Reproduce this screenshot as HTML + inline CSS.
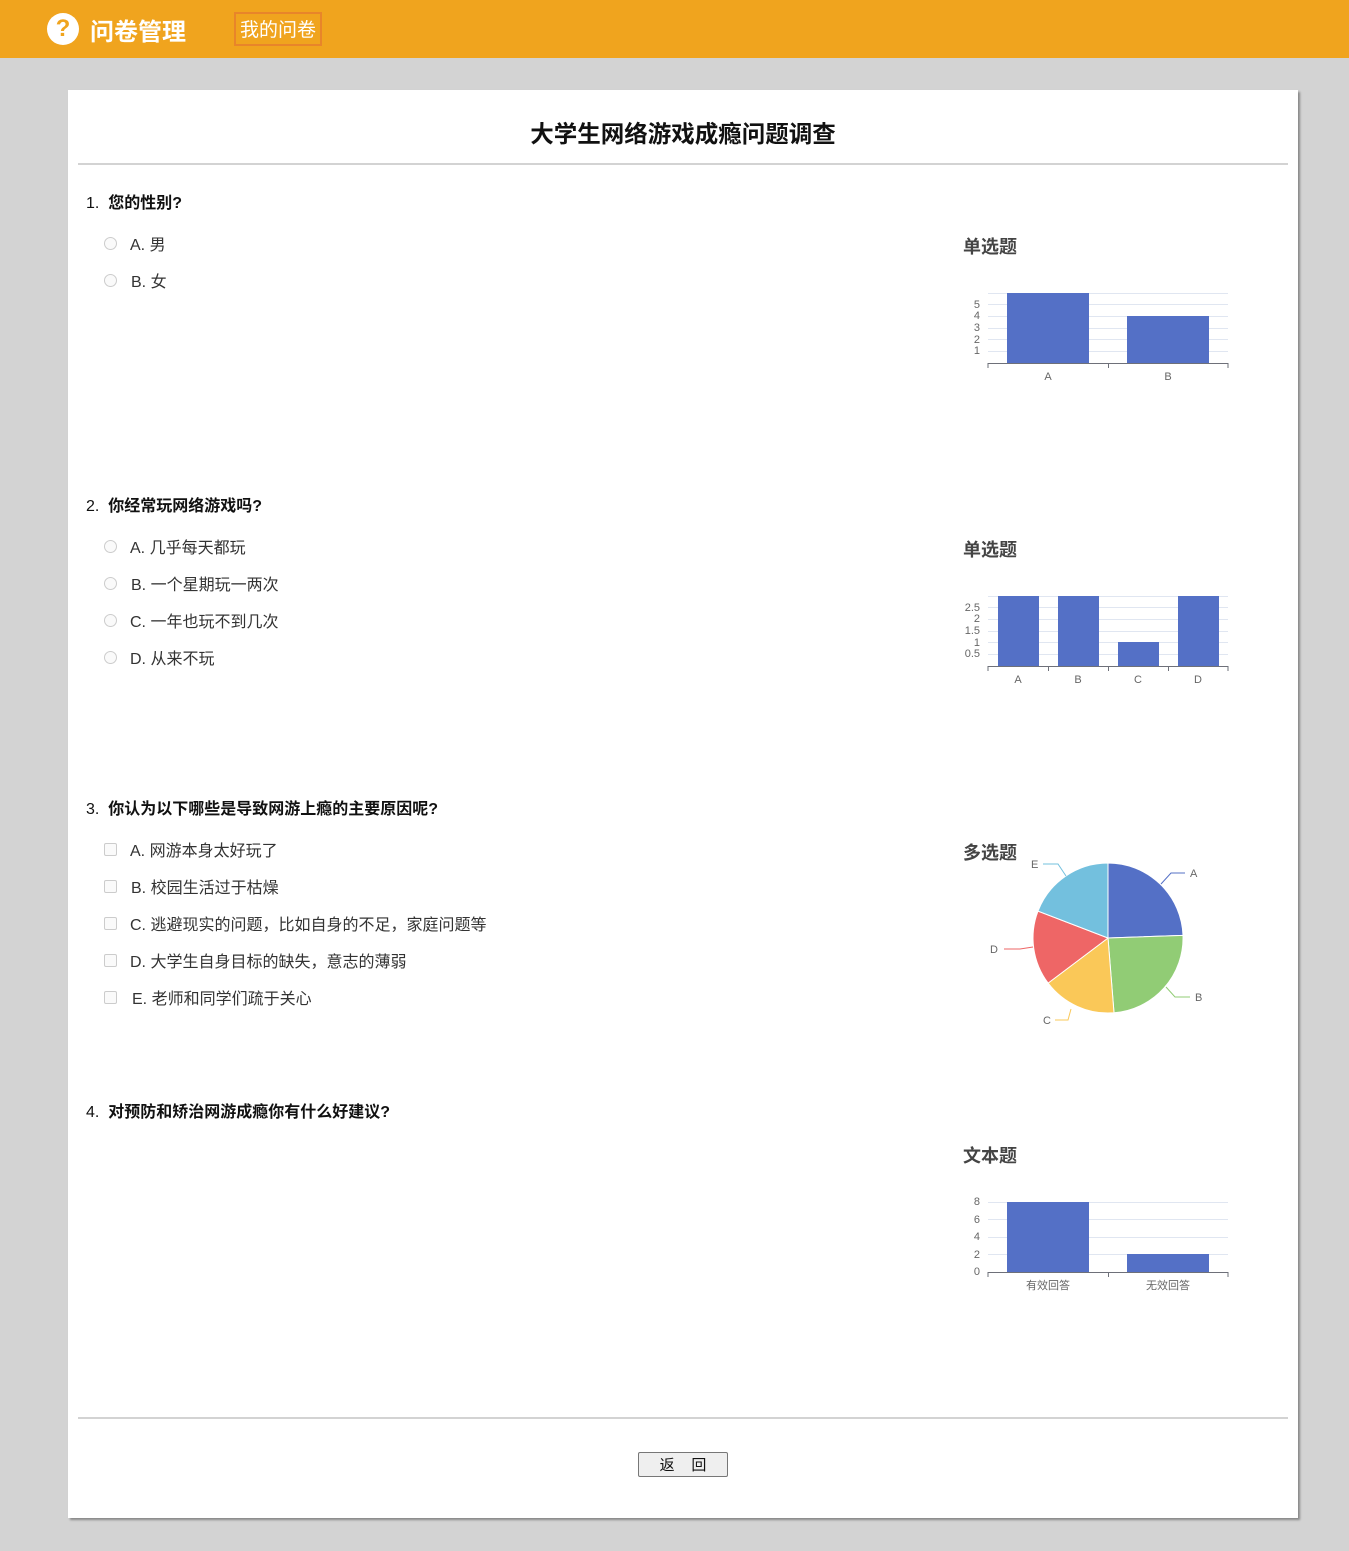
<!DOCTYPE html>
<html><head><meta charset="utf-8"><style>
body{margin:0;width:1349px;height:1551px;background:#d3d3d3;font-family:"Liberation Sans","Noto Sans CJK SC",sans-serif;position:relative;overflow:hidden}
.hdr{position:absolute;left:0;top:0;width:1349px;height:58px;background:#f0a41e}
.card{position:absolute;left:68px;top:90px;width:1230px;height:1428px;background:#fff;box-shadow:2px 2px 2px #888}
.a{position:absolute;white-space:nowrap}
.q{font-size:16px;color:#111}
.q b{font-weight:bold}
.o{font-size:16px;color:#333}
.r{position:absolute;width:11px;height:11px;border:1px solid #ccc;border-radius:50%;background:#fafafa}
.c{position:absolute;width:11px;height:11px;border:1px solid #ccc;border-radius:2px;background:#fafafa}
.ct{font-size:18px;font-weight:bold;color:#444}
</style></head><body>
<div class="hdr"></div>
<div class="a" style="left:47px;top:13px;width:32px;height:32px;border-radius:50%;background:#fff;color:#f0a41e;font-weight:bold;font-size:24px;text-align:center;line-height:32px">?</div>
<div class="a" style="left:90px;top:12px;font-size:24px;font-weight:bold;color:#fff">问卷管理</div>
<div class="a" style="left:234px;top:12px;width:84px;height:30px;border:2px solid #e8852a;color:#fff;font-size:19px;line-height:34px;text-align:center">我的问卷</div>
<div class="card"></div>
<div class="a" style="left:68px;width:1230px;top:115px;text-align:center;font-size:23.5px;font-weight:bold;color:#111">大学生网络游戏成瘾问题调查</div>
<div class="a" style="left:78px;top:163px;width:1210px;height:2px;background:#d3d3d3"></div>
<div class="a" style="left:78px;top:1417px;width:1210px;height:2px;background:#d3d3d3"></div>

<div class="a q" style="left:86px;top:189px">1.&nbsp; <b>您的性别?</b></div>
<div class="r" style="left:104px;top:237px"></div><div class="a o" style="left:130px;top:231px">A. 男</div>
<div class="r" style="left:104px;top:274px"></div><div class="a o" style="left:131px;top:268px">B. 女</div>

<div class="a q" style="left:86px;top:492px">2.&nbsp; <b>你经常玩网络游戏吗?</b></div>
<div class="r" style="left:104px;top:540px"></div><div class="a o" style="left:130px;top:534px">A. 几乎每天都玩</div>
<div class="r" style="left:104px;top:577px"></div><div class="a o" style="left:131px;top:571px">B. 一个星期玩一两次</div>
<div class="r" style="left:104px;top:614px"></div><div class="a o" style="left:130px;top:608px">C. 一年也玩不到几次</div>
<div class="r" style="left:104px;top:651px"></div><div class="a o" style="left:130px;top:645px">D. 从来不玩</div>

<div class="a q" style="left:86px;top:795px">3.&nbsp; <b>你认为以下哪些是导致网游上瘾的主要原因呢?</b></div>
<div class="c" style="left:104px;top:843px"></div><div class="a o" style="left:130px;top:837px">A. 网游本身太好玩了</div>
<div class="c" style="left:104px;top:880px"></div><div class="a o" style="left:131px;top:874px">B. 校园生活过于枯燥</div>
<div class="c" style="left:104px;top:917px"></div><div class="a o" style="left:130px;top:911px">C. 逃避现实的问题，比如自身的不足，家庭问题等</div>
<div class="c" style="left:104px;top:954px"></div><div class="a o" style="left:130px;top:948px">D. 大学生自身目标的缺失，意志的薄弱</div>
<div class="c" style="left:104px;top:991px"></div><div class="a o" style="left:132px;top:985px">E. 老师和同学们疏于关心</div>

<div class="a q" style="left:86px;top:1098px">4.&nbsp; <b>对预防和矫治网游成瘾你有什么好建议?</b></div>

<div class="a ct" style="left:963px;top:233px">单选题</div>
<div class="a ct" style="left:963px;top:536px">单选题</div>
<div class="a ct" style="left:963px;top:839px">多选题</div>
<div class="a ct" style="left:963px;top:1142px">文本题</div>

<svg class="a" style="left:0;top:0" width="1349" height="1551" font-family="Liberation Sans,Noto Sans CJK SC,sans-serif" font-size="11" fill="#666">
<g stroke="#e0e6f1" stroke-width="1">
<line x1="988" x2="1228" y1="293.5" y2="293.5"/><line x1="988" x2="1228" y1="304.5" y2="304.5"/><line x1="988" x2="1228" y1="316.5" y2="316.5"/><line x1="988" x2="1228" y1="328.5" y2="328.5"/><line x1="988" x2="1228" y1="339.5" y2="339.5"/><line x1="988" x2="1228" y1="351.5" y2="351.5"/>
<line x1="988" x2="1228" y1="596.5" y2="596.5"/><line x1="988" x2="1228" y1="607.5" y2="607.5"/><line x1="988" x2="1228" y1="619.5" y2="619.5"/><line x1="988" x2="1228" y1="631.5" y2="631.5"/><line x1="988" x2="1228" y1="642.5" y2="642.5"/><line x1="988" x2="1228" y1="654.5" y2="654.5"/>
<line x1="988" x2="1228" y1="1202.5" y2="1202.5"/><line x1="988" x2="1228" y1="1219.5" y2="1219.5"/><line x1="988" x2="1228" y1="1237.5" y2="1237.5"/><line x1="988" x2="1228" y1="1254.5" y2="1254.5"/>
</g>
<g fill="#5470c6">
<rect x="1007" y="293" width="82" height="70"/><rect x="1127" y="316" width="82" height="47"/>
<rect x="998" y="596" width="41" height="70"/><rect x="1058" y="596" width="41" height="70"/><rect x="1118" y="642" width="41" height="24"/><rect x="1178" y="596" width="41" height="70"/>
<rect x="1007" y="1202" width="82" height="70"/><rect x="1127" y="1254" width="82" height="18"/>
</g>
<g stroke="#6e7079" stroke-width="1" fill="none">
<path d="M988 368V363.5H1228V368M1108.5 363V368"/>
<path d="M988 671V666.5H1228V671M1048.5 666V671M1108.5 666V671M1168.5 666V671"/>
<path d="M988 1277V1272.5H1228V1277M1108.5 1272V1277"/>
</g>
<g text-anchor="end">
<text x="980" y="308">5</text><text x="980" y="319">4</text><text x="980" y="331">3</text><text x="980" y="343">2</text><text x="980" y="354">1</text>
<text x="980" y="611">2.5</text><text x="980" y="622">2</text><text x="980" y="634">1.5</text><text x="980" y="646">1</text><text x="980" y="657">0.5</text>
<text x="980" y="1205">8</text><text x="980" y="1223">6</text><text x="980" y="1240">4</text><text x="980" y="1258">2</text><text x="980" y="1275">0</text>
</g>
<g text-anchor="middle">
<text x="1048" y="380">A</text><text x="1168" y="380">B</text>
<text x="1018" y="683">A</text><text x="1078" y="683">B</text><text x="1138" y="683">C</text><text x="1198" y="683">D</text>
<text x="1048" y="1289">有效回答</text><text x="1168" y="1289">无效回答</text>
</g>
<g stroke="#fff" stroke-width="1">
<path d="M1108 938L1108 863A75 75 0 0 1 1183 935.4Z" fill="#5470c6"/>
<path d="M1108 938L1183 935.4A75 75 0 0 1 1114 1012.8Z" fill="#91cc75"/>
<path d="M1108 938L1114 1012.8A75 75 0 0 1 1048.1 983.1Z" fill="#fac858"/>
<path d="M1108 938L1048.1 983.1A75 75 0 0 1 1038 911.1Z" fill="#ee6666"/>
<path d="M1108 938L1038 911.1A75 75 0 0 1 1108 863Z" fill="#73c0de"/>
</g>
<g fill="none">
<path d="M1161 884L1171 873H1185" stroke="#5470c6"/>
<path d="M1166 987L1175 997H1190" stroke="#91cc75"/>
<path d="M1071 1009L1068 1020H1055" stroke="#fac858"/>
<path d="M1033 947L1020 949H1004" stroke="#ee6666"/>
<path d="M1066 876L1058 864H1043" stroke="#73c0de"/>
</g>
<text x="1190" y="877">A</text><text x="1195" y="1001">B</text><text x="1043" y="1024">C</text><text x="990" y="953">D</text><text x="1031" y="868">E</text>
</svg>

<div class="a" style="left:638px;top:1452px;width:88px;height:23px;border:1px solid #777;border-radius:2px;background:#efefef;font-size:15px;line-height:25px;text-align:center;color:#111">返&nbsp;&nbsp;&nbsp;&nbsp;回</div>
</body></html>
